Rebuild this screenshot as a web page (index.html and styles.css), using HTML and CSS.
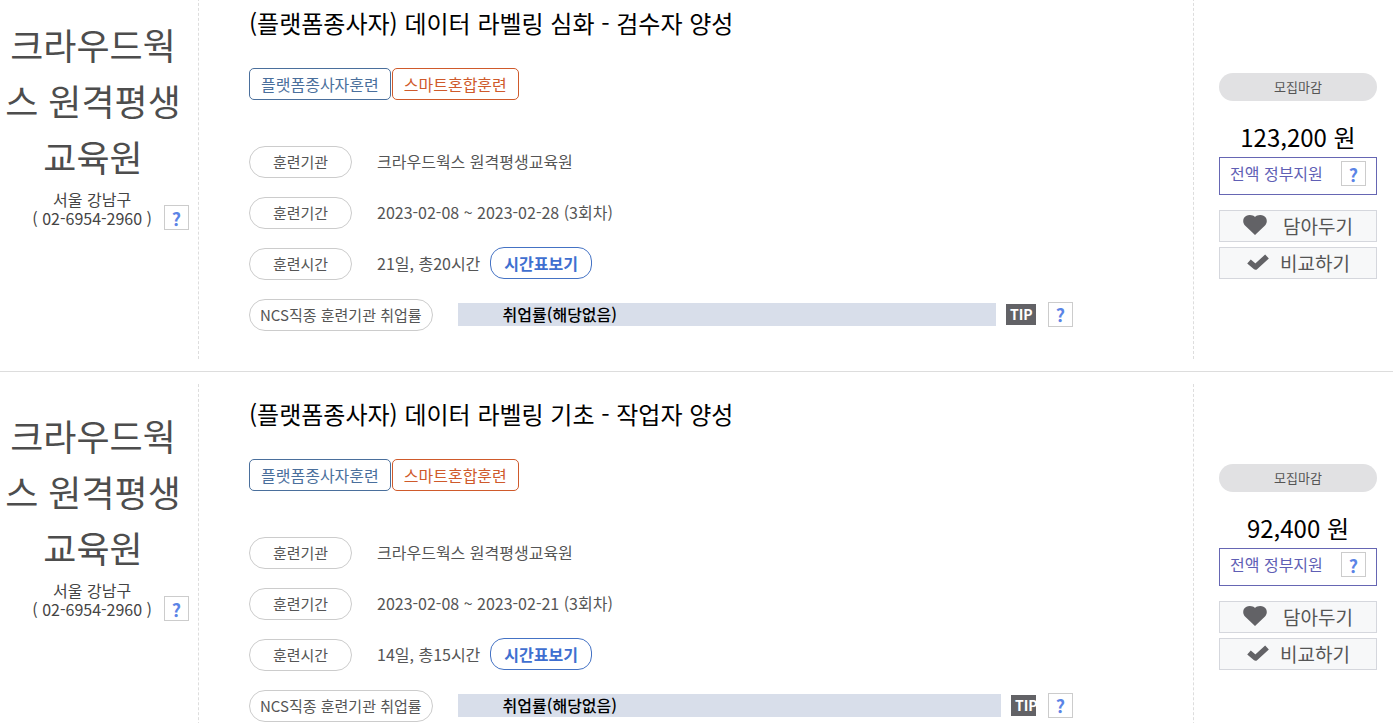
FILE: index.html
```
<!DOCTYPE html>
<html lang="ko">
<head>
  <meta charset="UTF-8">
  <title>훈련과정 검색</title>
  <link rel="stylesheet" href="styles.css">
</head>
<body>
  <ul class="course-list">
    <li class="course">
      <div class="agency">
        <strong class="agency-name">크라우드웍스 원격평생교육원</strong>
        <div class="agency-contact">
          <p>서울 강남구<br>( 02-6954-2960 )</p>
          <button type="button" class="help">?</button>
        </div>
      </div>
      <div class="info">
        <h2 class="title">(플랫폼종사자) 데이터 라벨링 심화 - 검수자 양성</h2>
        <div class="tags">
          <span class="tag tag-blue">플랫폼종사자훈련</span>
          <span class="tag tag-orange">스마트혼합훈련</span>
        </div>
        <dl class="fields">
          <div class="field">
            <dt>훈련기관</dt>
            <dd>크라우드웍스 원격평생교육원</dd>
          </div>
          <div class="field">
            <dt>훈련기간</dt>
            <dd>2023-02-08 ~ 2023-02-28 (3회차)</dd>
          </div>
          <div class="field">
            <dt>훈련시간</dt>
            <dd>21일, 총20시간 <button type="button" class="timetable">시간표보기</button></dd>
          </div>
          <div class="field">
            <dt>NCS직종 훈련기관 취업률</dt>
            <dd class="rate">
              <span class="rate-bar">취업률(해당없음)</span>
              <span class="tip">TIP</span>
              <button type="button" class="help">?</button>
            </dd>
          </div>
        </dl>
      </div>
      <div class="apply">
        <span class="status">모집마감</span>
        <p class="price">123,200 원</p>
        <div class="support">전액 정부지원 <button type="button" class="help">?</button></div>
        <button type="button" class="action">
          <svg class="icon-heart" width="24" height="20" viewBox="0 0 24 20"><path d="M12 20 2 10.500C-.8 7.500-.2 2.800 3 1 6.200-.6 10 0 12 2c2-2 5.800-2.600 9-1 3.200 1.800 3.800 6.500 1 9.500z" fill="#626266"/></svg>
          담아두기
        </button>
        <button type="button" class="action">
          <svg class="icon-check" width="24" height="18" viewBox="0 0 24 18"><path d="M3 8.500 9.500 14 21 3.500" fill="none" stroke="#626266" stroke-width="5.500" stroke-linejoin="round"/></svg>
          비교하기
        </button>
      </div>
    </li>

    <li class="course">
      <div class="agency">
        <strong class="agency-name">크라우드웍스 원격평생교육원</strong>
        <div class="agency-contact">
          <p>서울 강남구<br>( 02-6954-2960 )</p>
          <button type="button" class="help">?</button>
        </div>
      </div>
      <div class="info">
        <h2 class="title">(플랫폼종사자) 데이터 라벨링 기초 - 작업자 양성</h2>
        <div class="tags">
          <span class="tag tag-blue">플랫폼종사자훈련</span>
          <span class="tag tag-orange">스마트혼합훈련</span>
        </div>
        <dl class="fields">
          <div class="field">
            <dt>훈련기관</dt>
            <dd>크라우드웍스 원격평생교육원</dd>
          </div>
          <div class="field">
            <dt>훈련기간</dt>
            <dd>2023-02-08 ~ 2023-02-21 (3회차)</dd>
          </div>
          <div class="field">
            <dt>훈련시간</dt>
            <dd>14일, 총15시간 <button type="button" class="timetable">시간표보기</button></dd>
          </div>
          <div class="field">
            <dt>NCS직종 훈련기관 취업률</dt>
            <dd class="rate">
              <span class="rate-bar">취업률(해당없음)</span>
              <span class="tip tip-cut">TIP</span>
              <button type="button" class="help">?</button>
            </dd>
          </div>
        </dl>
      </div>
      <div class="apply">
        <span class="status">모집마감</span>
        <p class="price">92,400 원</p>
        <div class="support">전액 정부지원 <button type="button" class="help">?</button></div>
        <button type="button" class="action">
          <svg class="icon-heart" width="24" height="20" viewBox="0 0 24 20"><path d="M12 20 2 10.500C-.8 7.500-.2 2.800 3 1 6.200-.6 10 0 12 2c2-2 5.800-2.600 9-1 3.200 1.800 3.800 6.500 1 9.500z" fill="#626266"/></svg>
          담아두기
        </button>
        <button type="button" class="action">
          <svg class="icon-check" width="24" height="18" viewBox="0 0 24 18"><path d="M3 8.500 9.500 14 21 3.500" fill="none" stroke="#626266" stroke-width="5.500" stroke-linejoin="round"/></svg>
          비교하기
        </button>
      </div>
    </li>
  </ul>
</body>
</html>
```

FILE: styles.css
```
* {
  box-sizing: border-box;
}
body {
  margin: 0;
  height: 100vh;
  overflow: hidden;
  background: #fff;
  color: #555;
  font-family: "Noto Sans CJK KR", sans-serif;
  font-size: 16px;
}
button {
  font-family: inherit;
  padding: 0;
  cursor: pointer;
}
p, h2, dl, dd {
  margin: 0;
}

/* list */
.course-list {
  list-style: none;
  margin: -19px 0 0;
  padding: 0;
}
.course {
  display: flex;
  padding: 12px 0;
  border-bottom: 1px solid #ddd;
}

/* left: agency */
.agency {
  width: 199px;
  flex-shrink: 0;
  padding: 23px 9px 0 0;
  border-right: 1px dashed #ddd;
}
.agency-name {
  display: block;
  padding-right: 3px;
  font-size: 36px;
  font-weight: 400;
  line-height: 56px;
  color: #4d4d4d;
  text-align: center;
  word-break: break-all;
}
.agency-contact {
  display: flex;
  justify-content: flex-end;
  align-items: flex-end;
  gap: 12px;
  padding-top: 6px;
  color: #444;
  line-height: 19px;
  text-align: center;
}
.agency-contact p {
  padding-bottom: 2px;
}
.help {
  width: 25px;
  height: 25px;
  flex-shrink: 0;
  border: 1px solid #ccc;
  background: #fff;
  color: #5b84e6;
  font-size: 18px;
  font-weight: 700;
  line-height: 20px;
}

/* middle: course info */
.info {
  flex: 1;
  padding: 12px 120px 28px 50px;
}
.title {
  font-size: 24px;
  font-weight: 400;
  line-height: 36px;
  color: #000;
}
.tags {
  display: flex;
  gap: 1px;
  margin: 27px 0 46px;
}
.tag {
  padding: 0 11px;
  border: 1px solid;
  border-radius: 5px;
  line-height: 30px;
}
.tag-blue {
  color: #4a6f9c;
}
.tag-orange {
  color: #cf5a2b;
}
.fields {
  display: flex;
  flex-direction: column;
  gap: 19px;
}
.field {
  display: flex;
  align-items: center;
  gap: 25px;
  height: 32px;
}
.field dt {
  min-width: 103px;
  padding: 0 10px;
  border: 1px solid #ccc;
  border-radius: 16px;
  font-size: 15px;
  line-height: 30px;
  text-align: center;
}
.field dd {
  display: flex;
  align-items: center;
  gap: 10px;
  padding-bottom: 2px;
}
.timetable {
  height: 32px;
  padding: 0 13px;
  border: 1px solid #4472c4;
  border-radius: 14px;
  background: #fff;
  color: #3f6fd0;
  font-size: 16px;
  font-weight: 700;
}
.field .rate {
  flex: 1;
}
.rate-bar {
  flex: 1;
  padding-left: 45px;
  background: #d8deea;
  color: #000;
  font-weight: 500;
  line-height: 23px;
}
.tip {
  width: 30px;
  margin-right: 2px;
  padding-left: 4px;
  overflow: hidden;
  background: #626266;
  color: #fff;
  font-size: 14px;
  font-weight: 700;
  line-height: 21px;
}
.tip-cut {
  width: 25px;
}

/* right: price and buttons */
.apply {
  display: flex;
  flex-direction: column;
  width: 200px;
  flex-shrink: 0;
  padding: 80px 16px 0 25px;
  border-left: 1px dashed #ddd;
}
.status {
  border-radius: 14px;
  background: #e1e1e3;
  font-size: 13px;
  line-height: 28px;
  text-align: center;
}
.price {
  margin: 18px 0 2px;
  color: #000;
  font-size: 24px;
  line-height: 36px;
  text-align: center;
}
.support {
  display: flex;
  justify-content: space-between;
  height: 38px;
  margin-bottom: 15px;
  padding: 3px 10px;
  border: 1px solid #6666b3;
  color: #5f5fb5;
  line-height: 24px;
}
.action {
  display: flex;
  justify-content: center;
  align-items: center;
  height: 32px;
  margin-bottom: 5px;
  padding-bottom: 2px;
  border: 1px solid #d5d7dd;
  background: #f7f8f9;
  color: #555;
  font-size: 19px;
}
.icon-heart {
  margin-right: 16px;
}
.icon-check {
  margin-right: 10px;
}
```
